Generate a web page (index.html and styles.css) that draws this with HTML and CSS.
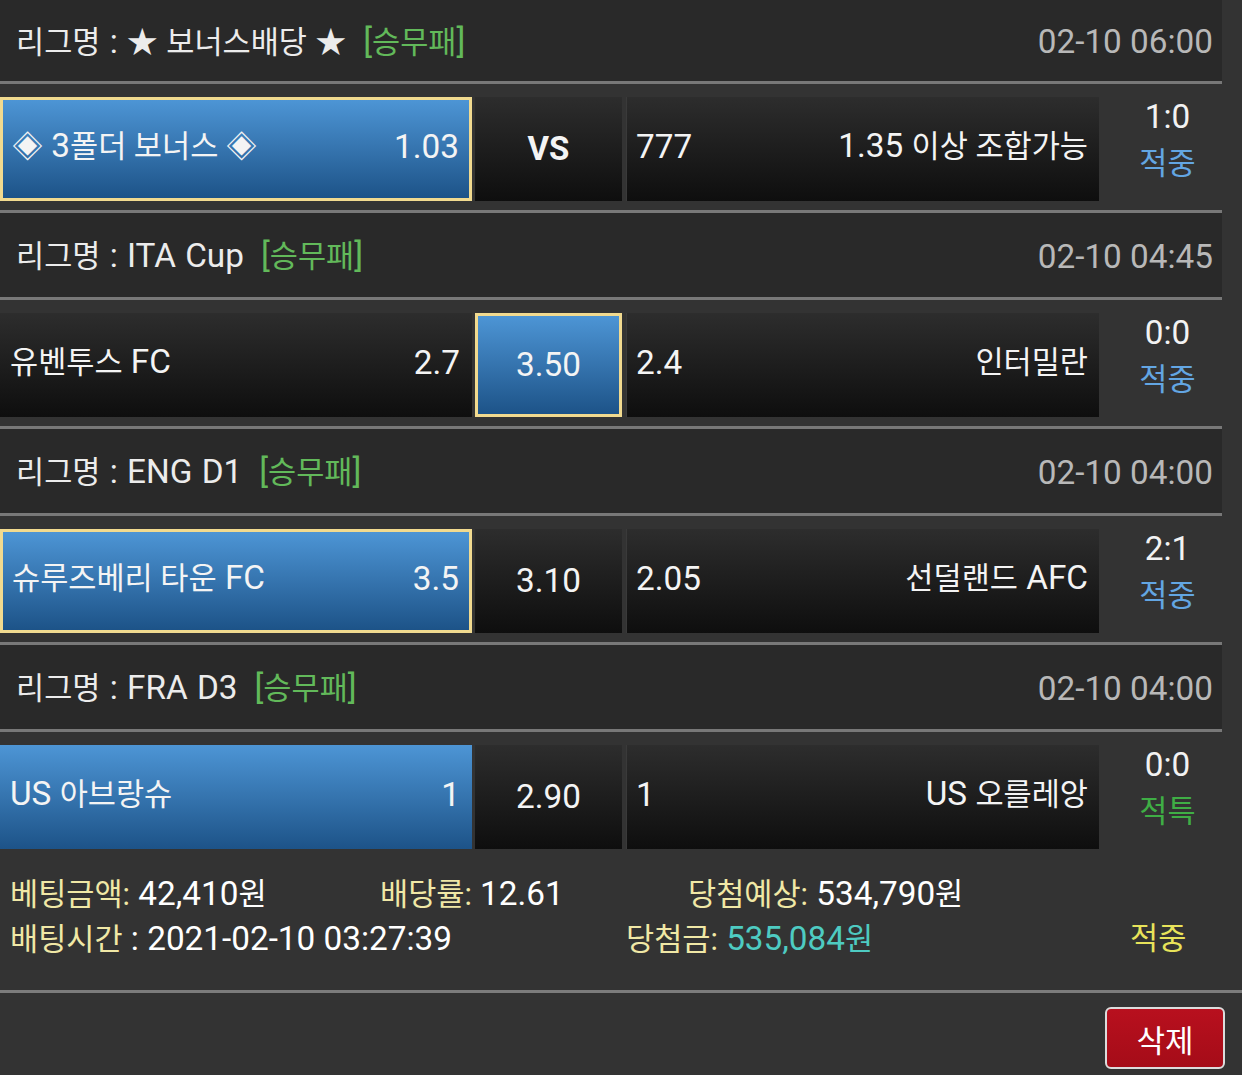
FILE: index.html
```html
<!DOCTYPE html>
<html lang="ko">
<head>
<meta charset="utf-8">
<title>베팅내역</title>
<link rel="stylesheet" href="styles.css">
</head>
<body>
<div class="games">
  <section class="game">
    <div class="league"><span class="lname"><span class="k">리그명</span> : <span class="k">★ 보너스배당 ★</span><span class="type">[<span class="k">승무패</span>]</span></span><span class="date">02-10 06:00</span></div>
    <div class="match">
      <div class="cell home sel"><span><span class="k">◈</span> 3<span class="k">폴더 보너스 ◈</span></span><span>1.03</span></div>
      <div class="cell draw"><b class="vs">VS</b></div>
      <div class="cell away"><span>777</span><span>1.35 <span class="k">이상 조합가능</span></span></div>
      <div class="score"><div class="sc">1:0</div><div class="res hit">적중</div></div>
    </div>
  </section>
  <section class="game">
    <div class="league"><span class="lname"><span class="k">리그명</span> : ITA Cup<span class="type">[<span class="k">승무패</span>]</span></span><span class="date">02-10 04:45</span></div>
    <div class="match">
      <div class="cell home"><span><span class="k">유벤투스</span> FC</span><span>2.7</span></div>
      <div class="cell draw sel"><span>3.50</span></div>
      <div class="cell away"><span>2.4</span><span class="k">인터밀란</span></div>
      <div class="score"><div class="sc">0:0</div><div class="res hit">적중</div></div>
    </div>
  </section>
  <section class="game">
    <div class="league"><span class="lname"><span class="k">리그명</span> : ENG D1<span class="type">[<span class="k">승무패</span>]</span></span><span class="date">02-10 04:00</span></div>
    <div class="match">
      <div class="cell home sel"><span><span class="k">슈루즈베리 타운</span> FC</span><span>3.5</span></div>
      <div class="cell draw"><span>3.10</span></div>
      <div class="cell away"><span>2.05</span><span><span class="k">선덜랜드</span> AFC</span></div>
      <div class="score"><div class="sc">2:1</div><div class="res hit">적중</div></div>
    </div>
  </section>
  <section class="game">
    <div class="league"><span class="lname"><span class="k">리그명</span> : FRA D3<span class="type">[<span class="k">승무패</span>]</span></span><span class="date">02-10 04:00</span></div>
    <div class="match">
      <div class="cell home blue"><span>US <span class="k">아브랑슈</span></span><span>1</span></div>
      <div class="cell draw"><span>2.90</span></div>
      <div class="cell away"><span>1</span><span>US <span class="k">오를레앙</span></span></div>
      <div class="score"><div class="sc">0:0</div><div class="res spc">적특</div></div>
    </div>
  </section>
</div>
<div class="footer">
  <div class="frow">
    <span class="c1"><span class="lbl">베팅금액:</span> 42,410<span class="k">원</span></span>
    <span class="c2"><span class="lbl">배당률:</span> 12.61</span>
    <span><span class="lbl">당첨예상:</span> 534,790<span class="k">원</span></span>
  </div>
  <div class="frow">
    <span class="c3"><span class="lbl">배팅시간</span> : 2021-02-10 03:27:39</span>
    <span class="c4"><span class="lbl">당첨금:</span> <span class="win">535,084<span class="k">원</span></span></span>
    <span class="status k">적중</span>
  </div>
</div>
<div class="actions"><button class="del">삭제</button></div>
</body>
</html>
```
FILE: styles.css
```css
html, body {
  margin: 0;
  padding: 0;
}
body {
  background: #333333;
  color: #ffffff;
  font-family: Roboto, "Noto Sans CJK KR", sans-serif;
  font-size: 33.3px;
  width: 1242px;
  height: 1075px;
  overflow: hidden;
}
.k {
  font-size: 30.6px;
}
.games {
  width: 1222px;
}
.league {
  background: #292929;
  border-top: 3px solid #787878;
  border-bottom: 3px solid #787878;
  display: flex;
  align-items: center;
  justify-content: space-between;
  padding: 3px 9px 0 16px;
  height: 81px;
  line-height: 40px;
  word-spacing: 1px;
}
.game:first-child .league {
  border-top: 0;
  height: 78px;
}
.lname {
  color: #ececec;
}
.type {
  color: #62b95a;
  margin-left: 17px;
}
.date {
  color: #b8b8b8;
  word-spacing: 0;
}
.match {
  display: flex;
  padding: 13px 0 9px;
  height: 104px;
}
.cell {
  height: 104px;
  box-sizing: border-box;
  display: flex;
  align-items: center;
  justify-content: space-between;
  background: linear-gradient(#2d2d2d, #0e0e0e);
  color: #f4f4f4;
  line-height: 40px;
  white-space: nowrap;
}
.home {
  width: 472px;
  padding: 0 12px 5px 10px;
}
.draw {
  width: 147px;
  margin-left: 3px;
  justify-content: center;
}
.away {
  width: 473px;
  margin-left: 4px;
  padding: 0 11px 5px 10px;
  box-shadow: inset 1px 0 0 #3a3a3a;
}
.vs {
  font-weight: 700;
  font-size: 33px;
}
.sel, .blue {
  background: linear-gradient(#4d95d5, #1d5388);
}
.sel {
  border: 3px solid #f1da8f;
}
.home.sel {
  padding-left: 9px;
  padding-right: 10px;
}
.score {
  width: 109px;
  padding-left: 14px;
  text-align: center;
}
.sc {
  line-height: 40px;
  color: #f2f2f2;
}
.res {
  line-height: 54px;
  font-size: 30.6px;
}
.hit {
  color: #63a6e3;
}
.spc {
  color: #3fae45;
}
.footer {
  border-bottom: 3px solid #7c7c7c;
  padding: 13px 0 0 10px;
  height: 119px;
}
.frow {
  display: flex;
  height: 45px;
  line-height: 45px;
  white-space: nowrap;
}
.frow > span {
  height: 45px;
}
.lbl {
  color: #f0e8a6;
  font-size: 30.6px;
}
.c1 { width: 370px; }
.c2 { width: 308px; }
.c3 { width: 616px; }
.c4 { width: 504px; }
.win {
  color: #4ecbc2;
}
.status {
  color: #e8e35a;
}
.actions {
  display: flex;
  justify-content: flex-end;
  padding: 14px 17px 0 0;
}
.del {
  width: 120px;
  height: 62px;
  background: linear-gradient(#b8101e, #a50c18);
  border: 2px solid #dcdcdc;
  border-radius: 6px;
  color: #ffffff;
  font-family: Roboto, "Noto Sans CJK KR", sans-serif;
  font-size: 31px;
  padding: 0;
}
```
